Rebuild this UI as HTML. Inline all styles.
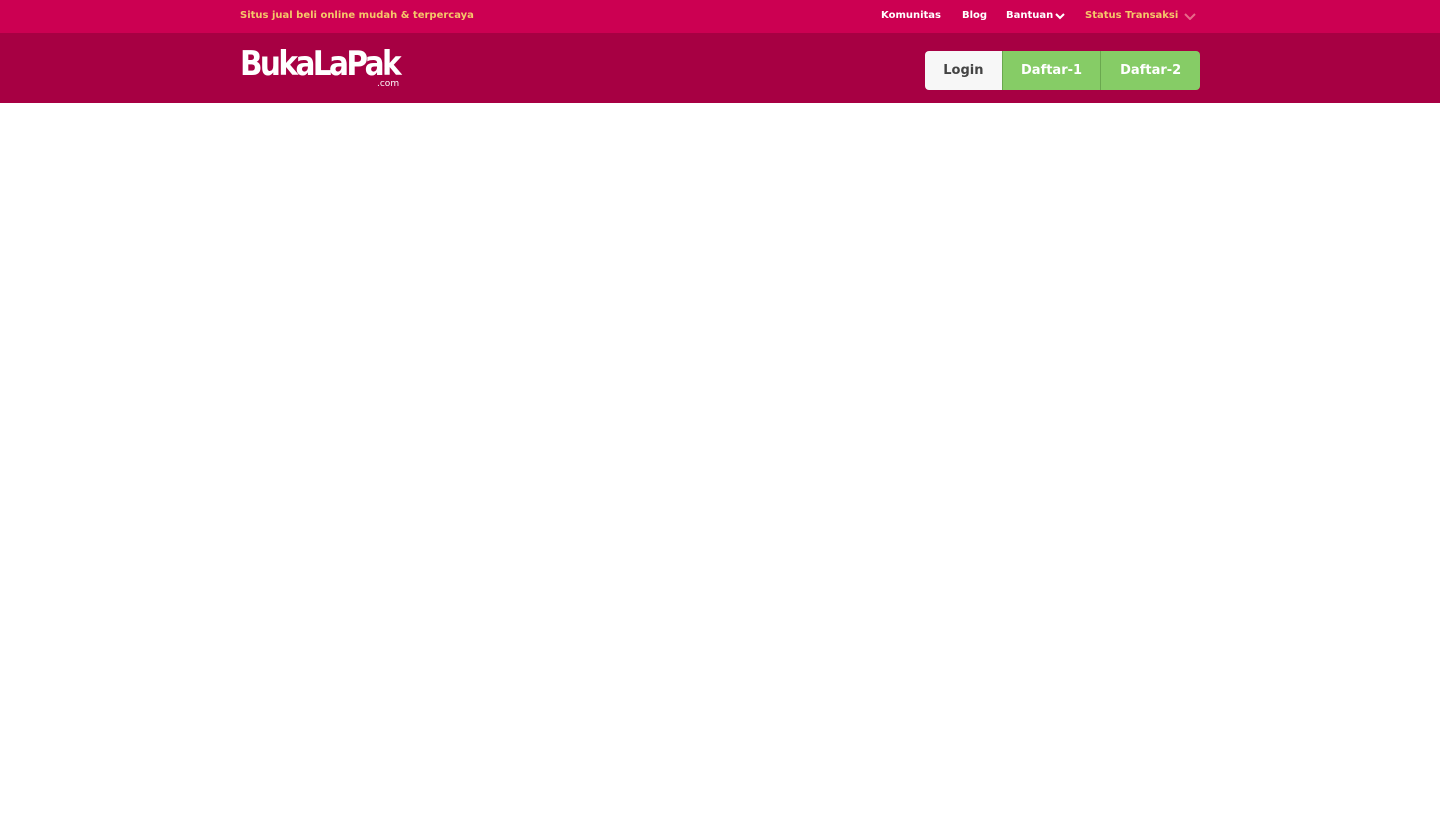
<!DOCTYPE html>
<html><head><style>
body{margin:0;background:#fff;font-family:"DejaVu Sans","Liberation Sans",sans-serif;}
.top{height:33px;background:#cc0052;position:relative;}
.main{height:70px;background:#a70043;position:relative;}
.t{position:absolute;top:10px;font-size:10px;font-weight:bold;color:#fff;white-space:nowrap;}
.y{color:#f5c76a;}
.logo{position:absolute;left:240px;top:11px;color:#fff;font:bold 34px "DejaVu Sans",sans-serif;letter-spacing:-3px;transform:scaleX(0.87);transform-origin:left;}
.com{position:absolute;left:377px;top:46px;color:#fff;font-size:9px;}
.btns{position:absolute;left:925px;top:51px;width:275px;height:39px;border-radius:4px;overflow:hidden;display:flex;font-size:13px;font-weight:bold;}
.btns div{display:flex;align-items:center;justify-content:center;}
</style></head><body>
<div class="top">
<div class="t y" style="left:240px">Situs jual beli online mudah &amp; terpercaya</div>
<div class="t" style="left:881px">Komunitas</div>
<div class="t" style="left:962px">Blog</div>
<div class="t" style="left:1006px">Bantuan</div>
<div class="t y" style="left:1085px">Status Transaksi</div>
</div>
<div class="main">
<div class="logo">BukaLaPak</div>
<div class="com">.com</div>
</div>
<svg style="position:absolute;left:1055px;top:12px" width="10" height="8"><path d="M1 2 L5 6 L9 2" stroke="#fff" stroke-width="2" fill="none"/></svg>
<svg style="position:absolute;left:1184px;top:12px" width="12" height="8"><path d="M1 2 L6 7 L11 2" stroke="#e86a8a" stroke-width="2" fill="none"/></svg>
<div class="btns">
<div style="width:77px;background:#f7f7f7;color:#444">Login</div>
<div style="width:98px;background:#86cc66;color:#fff;border-left:1px solid #6aa84f">Daftar-1</div>
<div style="width:99px;background:#86cc66;color:#fff;border-left:1px solid #6aa84f">Daftar-2</div>
</div>
</body></html>
